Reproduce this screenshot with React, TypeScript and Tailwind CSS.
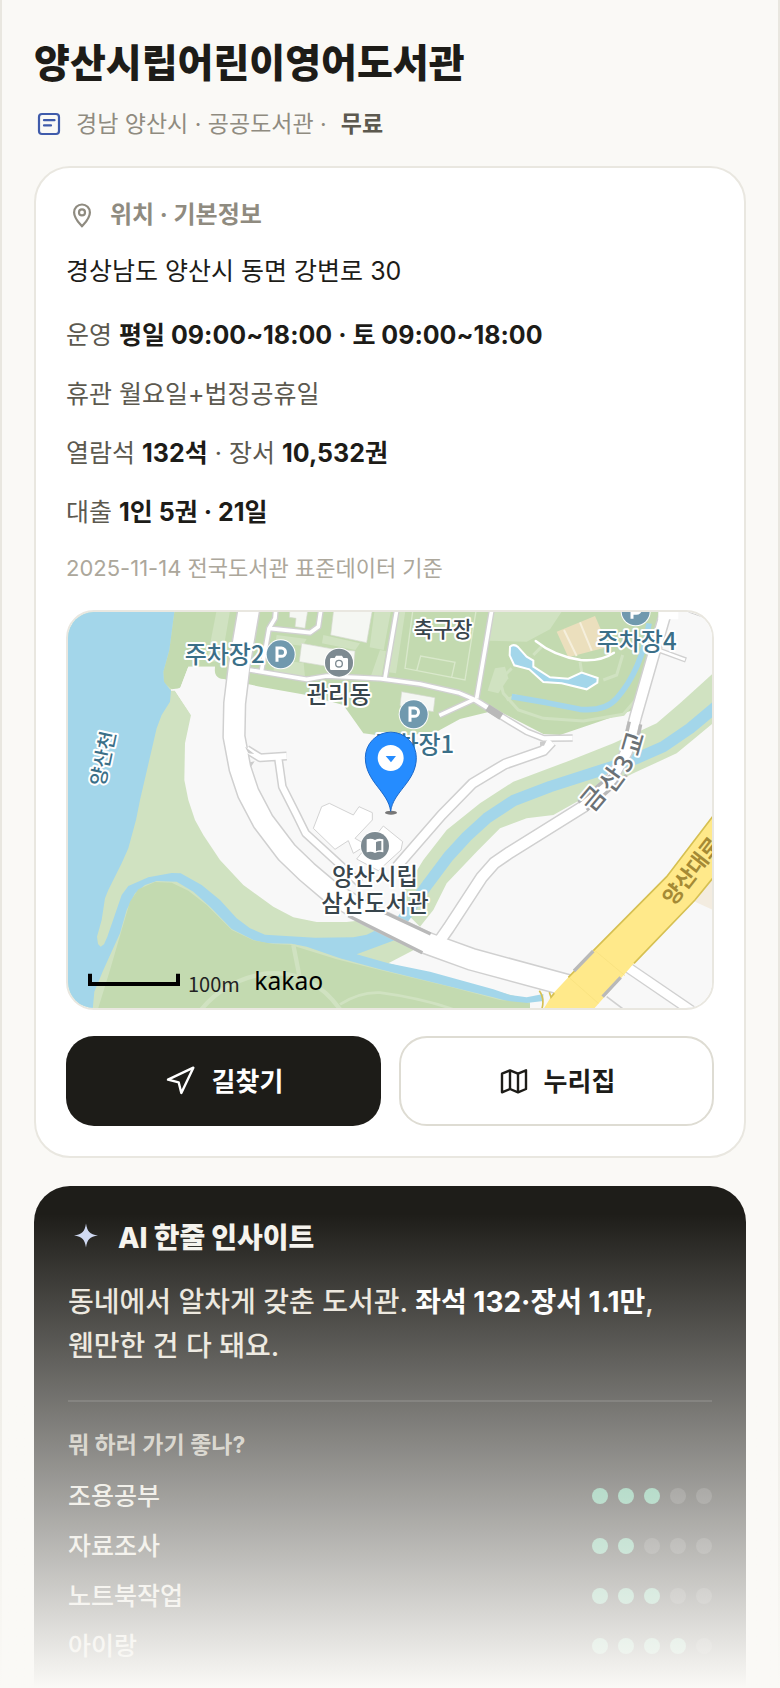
import type { ReactNode } from 'react';
import { Navigation } from 'lucide-react';

const ACTIVITIES = [
    { name: '조용공부', score: 3 },
    { name: '자료조사', score: 2 },
    { name: '노트북작업', score: 3 },
    { name: '아이랑', score: 4 },
];

const DocIcon = () => (
    <svg viewBox="0 0 30 30" className="size-[30px] shrink-0" fill="none" stroke="#3f5bab" strokeWidth="2.200" strokeLinecap="round" aria-hidden="true">
        <rect x="5" y="5" width="20" height="20" rx="3" />
        <path d="M10 11.2h10.500M10 16.400h7" />
    </svg>
);

const PinIcon = () => (
    <svg viewBox="0 0 30 30" className="size-[30px] shrink-0" fill="none" stroke="#8f8b80" strokeWidth="2.200" strokeLinejoin="round" aria-hidden="true">
        <path d="M16 26.300c-2-2.600-7.900-7.800-7.900-13.900a7.900 7.900 0 0 1 15.800 0c0 6.100-5.900 11.300-7.900 13.900z" />
        <circle cx="16" cy="12.400" r="3" />
    </svg>
);

const FoldedMapIcon = () => (
    <svg viewBox="0 0 24 24" className="size-8" fill="none" stroke="currentColor" strokeWidth="1.800" strokeLinejoin="round" aria-hidden="true">
        <path d="M3 6.500 9 4l6 2.500L21 4v14l-6 2.500L9 18l-6 2.500z" />
        <path d="M9 4v14M15 6.500v14" />
    </svg>
);

const SparkIcon = () => (
    <svg viewBox="0 0 36 36" className="size-9 shrink-0" fill="#ced8f2" aria-hidden="true">
        <path d="M18 3.500c1.200 7.800 3.600 10.800 12 12-8.400 1.200-10.800 4.200-12 12-1.200-7.800-3.600-10.800-12-12 8.400-1.200 10.800-4.200 12-12z" />
    </svg>
);

type LabelProps = {
    x: number;
    y: number;
    size?: number;
    weight?: number;
    rotate?: number;
    fill?: string;
    halo?: string;
    anchor?: 'start' | 'middle';
    children: ReactNode;
};

const MapLabel = ({ x, y, size = 72, weight = 500, rotate = 0, fill = '#38454c', halo = '#ffffff', anchor = 'start', children }: LabelProps) => (
    <text
        transform={`translate(${x} ${y}) rotate(${rotate})`}
        fontSize={size}
        fontWeight={weight}
        fill={fill}
        stroke={halo}
        strokeWidth="12"
        strokeLinejoin="round"
        paintOrder="stroke"
        textAnchor={anchor}
    >
        {children}
    </text>
);

const Parking = ({ x, y }: { x: number; y: number }) => (
    <g transform={`translate(${x} ${y})`}>
        <circle r="45" fill="#fff" />
        <circle r="42" fill="#7099ae" />
        <path d="M-11 22v-41h13a12 12 0 0 1 0 25h-13" fill="none" stroke="#fff" strokeWidth="9" />
    </g>
);

const mainRoad = 'M568 20 538 195 524 310 522 410 540 505 565 580 610 665 680 757 740 815 812 876 925 945 1097 1028 1235 1078 1530 1158';
const bridgeRoad = 'M1130 1035 1165 985 1265 832 1302 790 1350 757 1570 620 1650 545 1700 455 1727 350 1790 130 1822 20';
const parkRoads =
    'M570 210 740 238 800 228 960 236 1080 252 1195 278 1243 298 1138 346M1012 20 975 234M1297 20 1250 295M648 20 645 55 627 85 605 210M627 85 750 98 775 80 784 20';
const linkRoad = 'M1243 298 1345 362 1400 395 1450 415 1538 414';
const loopRoad = 'M1475 425 1450 452 1335 492 1238 550 1145 645 1010 800';
const rampRoad = 'M560 448 600 473 680 468M655 475 667 560 710 645 737 700 830 785 900 850';
const cornerRoad = 'M1700 1100 1920 1250';

const MapDrawing = () => (
    <svg
        viewBox="24 36 1932 1188"
        preserveAspectRatio="xMidYMid slice"
        className="block size-full font-['Noto_Sans_CJK_KR','Noto_Sans',sans-serif]"
        role="img"
        aria-label="도서관 주변 지도"
    >
        <rect x="0" y="0" width="2000" height="1300" fill="#f8f8f8" />

        {/* river banks */}
        <path
            fill="#d0e2c1"
            d="M0 20H345L333 272H345L393 345 375 430 373 540 385 600 405 660 430 705 480 780 550 855 640 920 700 952 770 966 860 966 960 955 1080 1040 985 1090 1410 1200V1240H0z"
        />
        <path
            fill="#d0e2c1"
            d="M1010 910 1090 780 1160 690 1260 610 1360 545 1520 485 1660 430 1790 370 1860 310 1970 210V360L1910 410 1850 460 1720 520 1560 600 1480 645 1400 655 1320 685 1250 755 1160 850 1120 930 1080 980z"
        />

        {/* park */}
        <path fill="#c3dab0" d="M345 20 328 150 310 215 312 248 335 268 360 265 385 200 465 200 470 225 495 238 600 260 740 285 850 315 910 400 1000 412 1130 395 1200 357 1310 330 1450 402 1500 405 1720 330 1840 20z" />
        <path fill="#f8f8f8" d="M385 200H465L470 225 495 238 505 330 393 345 345 272 362 262z" />
        <path fill="#c3dab0" d="M465 200h40l-8 38c-20-2-36-6-32-38z" />
        <g fill="#d0e2c1">
            <path d="M472 20h40L484 185H440zM1300 20h215L1470 88 1400 125 1285 122zM650 105l90 12-12 20-82-8zM945 20h50l-24 130-42-8zM640 215l95 16-4-42-85-10zM960 150l18 4-14 78-32-2zM1010 20h28l-30 200-28-4zM790 105l110 25-14 20-100-20z" />
            <path d="m1305 205 30-5 10 35-30 45-32-8z" />
        </g>

        {/* playing field and courts */}
        <g fill="none" stroke="#d9e8cb" strokeWidth="4">
            <path d="m1060 20-25 185 180 35 35-220M1070 213l12-45 103 19-10 45" />
        </g>
        <path fill="#ebdfbd" d="m1490 95 115-47 40 92-120 32z" />
        <path fill="none" stroke="#f5efdc" strokeWidth="6" d="m1512 90 38 78M1560 67l35 85" />
        <g fill="none" stroke="#d0e2c1" strokeWidth="9">
            <path d="m1355 205-35 35 10 40 45 50 75 25 120 8 120-20 60-70 35-110 20-80M1370 285l-30 15M1560 185l5 30M1630 240l40-15 18-60M1420 165l25-25" />
        </g>
        <path fill="none" stroke="#fff" strokeWidth="7" strokeLinecap="round" d="M1427 123q55 45 135 57 60 5 100-22" />

        {/* buildings */}
        <g fill="#f5f7f3" stroke="#d5dacf" strokeWidth="2">
            <path d="m690 20-2 32 20 3-3 25 30 5 10-65zM822 20l-10 85 108 23 19-108zM725 130l-7 55 95 16 68-3 4-45-60-5zM1025 275l100 18-5 42-100-18z" />
        </g>
        <g fill="#fff" stroke="#d3d3d3" strokeWidth="3">
            <path d="m760 685 25-65 23-10 72 35 17-25 40 18v22l-52 55 35 20-40 25-15-38-40 26zM970 678l58 47-5 25-68 62-65-35z" />
        </g>

        {/* water */}
        <g fill="#a3d6ea">
            <path d="M0 20H345L328 150 310 215 312 245 333 272 330 305 305 345 290 385 240 600 228 660 205 745 185 790 145 870 135 895 125 960 111 1010 114 1032 122 1040 132 1033 142 1010 185 885 205 858 265 832 335 819 362 820 425 855 480 900 530 955 570 985 615 1004 765 1013 880 1012 920 1004 980 975 1060 1000 890 1063 985 1090 1110 1115 1300 1168 1350 1185 1400 1192 1450 1182V1203L1400 1209 1360 1208 1300 1192 1130 1150 960 1108 840 1075 740 1040 695 1031 620 1030 580 1020 515 987 450 920 400 875 350 845 290 843 255 855 225 880 200 930 180 1000 130 1110 103 1175 97 1240H0z" />
            <path d="M1350 140q12-10 25 2l25 28 20 12v18l50 32 55 4 40-18 48 16-1 14-32 20-75-18-55-4-42-38-45-12-14-30z" stroke="#fff" strokeWidth="6" />
        </g>
        <g fill="none" stroke="#a3d6ea" strokeLinejoin="round">
            <path strokeWidth="34" d="M1020 970 1105 850 1165 770 1220 710 1280 655 1360 602 1470 560 1650 502 1730 475 1810 440 1890 385 1980 310" />
            <path strokeWidth="17" d="M1355 290 1460 308 1560 328Q1635 335 1670 295 1745 210 1767 70" />
        </g>

        {/* lower meadow */}
        <path fill="#c3dab0" d="M110 1240 150 1110 185 990 210 905 235 868 285 846 335 848 385 872 440 915 515 990 580 1021 640 1032 690 1034 830 1078 960 1110 1160 1158 1320 1200 1410 1210V1240z" />
        <g fill="none" stroke="#d0e2c1" strokeWidth="13">
            <path d="M415 1240Q490 1140 620 1120 760 1110 845 1235M700 1035l18 92" />
            <path strokeWidth="8" d="M840 1213Q900 1175 960 1178 1090 1195 1200 1235" />
        </g>

        {/* road casings, then surfaces, so that junctions merge */}
        <g fill="none" stroke="#d0d0d0" strokeLinejoin="round">
            <path strokeWidth="70" d={mainRoad} />
            <path strokeWidth="40" d={bridgeRoad} />
            <path strokeWidth="19" d={parkRoads} />
            <path strokeWidth="22" d={linkRoad} />
            <path strokeWidth="34" d={loopRoad} />
            <path strokeWidth="27" d={rampRoad} />
            <path strokeWidth="34" d={cornerRoad} />
            <path strokeWidth="16" d="m1795 150 83 30" />
            <path strokeWidth="5" d="m1640 1190 60 45" />
            <path strokeWidth="3" d="m1885 36 80 28" />
        </g>
        <g fill="none" stroke="#fff" strokeLinejoin="round">
            <path strokeWidth="61" d={mainRoad} />
            <path strokeWidth="31" d={bridgeRoad} />
            <path strokeWidth="11" d={parkRoads} />
            <path strokeWidth="13" d={linkRoad} />
            <path strokeWidth="25" d={loopRoad} />
            <path strokeWidth="18" d={rampRoad} />
            <path strokeWidth="26" d={cornerRoad} />
            <path strokeWidth="8" d="m1790 148 85 31" />
            <path strokeWidth="26" d="M1795 45h60" />
        </g>
        <path fill="#ccc" d="m555 440 28 22-18-2zM570 487l14-3-12 18zM1440 425h18l-6 12h-12z" />
        <g fill="none" stroke="#b9b9b9" strokeWidth="10">
            <path d="m865 947 222 111M975 938l137 64M1708 365l-10 45M1742 373l-8 40M1555 607l110-92M1580 630l120-105" />
            <path strokeWidth="22" d="m1282 323 42 27" />
        </g>

        {/* highway */}
        <path fill="#f3ece0" d="m1905 905 60 28V820z" />
        <path fill="#ffe98a" d="M1970 634 1820 830 1600 1052 1525 1132 1478 1182 1443 1240H1590L1700 1115 1722 1090 1905 900 1970 820z" />
        <g fill="none" stroke="#d6c052" strokeWidth="5">
            <path d="M1970 634 1820 830 1600 1052M1970 820 1905 900 1722 1090M1545 1112l-20 20M1438 1172q18 26 6 60M1468 1177l5 15 10-12" />
        </g>
        <path fill="none" stroke="#b9b9b9" strokeWidth="10" d="m1600 1053-58 60M1682 1132l-54 58" />
        <path fill="none" stroke="#f6df7c" strokeWidth="2" d="m1605 1052 90 75M1530 1135l85 75" />

        {/* labels */}
        <Parking x={662} y={163} />
        <Parking x={1061} y={343} />
        <Parking x={1727} y={34} />
        <MapLabel x={374} y={188} fill="#3b6f88">주차장2</MapLabel>
        <MapLabel x={1610} y={149} fill="#3b6f88">주차장4</MapLabel>
        <MapLabel x={943} y={460} fill="#3b6f88">주차장1</MapLabel>
        <MapLabel x={836} y={308} size={70} anchor="middle">관리동</MapLabel>
        <MapLabel x={1149} y={110} size={64} anchor="middle">축구장</MapLabel>
        <MapLabel x={945} y={855} size={70} anchor="middle">양산시립</MapLabel>
        <MapLabel x={945} y={935} size={70} anchor="middle">삼산도서관</MapLabel>
        <MapLabel x={150} y={480} size={60} rotate={-78} fill="#3b6f88" anchor="middle">양산천</MapLabel>
        <g>
            <MapLabel x={1620} y={613} size={76} rotate={-50} fill="#6b7276" anchor="middle">금</MapLabel>
            <MapLabel x={1677} y={555} size={76} rotate={-54} fill="#6b7276" anchor="middle">산</MapLabel>
            <MapLabel x={1715} y={503} size={76} rotate={-62} fill="#6b7276" anchor="middle">3</MapLabel>
            <MapLabel x={1745} y={438} size={76} rotate={-74} fill="#6b7276" anchor="middle">교</MapLabel>
        </g>
        <MapLabel x={1840} y={920} size={64} weight={700} rotate={-52} fill="#a58a35" halo="#ffe98a">양산대로</MapLabel>

        <g transform="translate(837 188)">
            <circle r="45" fill="#fff" />
            <circle r="42" fill="#7d8a91" />
            <path fill="#fff" d="M-23-14h10l4-7H9l4 7h10q4 0 4 4v28q0 4-4 4h-46q-4 0-4-4v-28q0-4 4-4z" />
            <circle cy="3" r="10" fill="#fff" stroke="#7d8a91" strokeWidth="4" />
        </g>
        <g transform="translate(945 738)">
            <circle r="45" fill="#fff" />
            <circle r="42" fill="#7d8a91" />
            <path fill="#fff" d="M-25-20q14-4 25 2 11-6 25-2v39q-14-4-25 2-11-6-25-2z" />
            <path fill="#7d8a91" d="M3-12q8-4 16-3v28q-8-1-16 3z" />
        </g>

        {/* library marker */}
        <ellipse cx="993" cy="638" rx="18" ry="6" fill="#777" />
        <path
            d="M992 634C985 575 916 545 916 473a76 76 0 0 1 153 0C1069 545 999 575 992 634z"
            fill="#258cff"
            stroke="#1c69ca"
            strokeWidth="3"
        />
        <circle cx="992" cy="474" r="39" fill="#fff" />
        <path fill="#258cff" d="M977 468h31l-15 19z" />

        {/* scale bar */}
        <path d="M90 1121v31h264v-31" fill="none" stroke="#000" strokeWidth="12" />
        <text x="384" y="1175" fontSize="60" fill="#222">100m</text>
        <text x="583" y="1169" fontSize="74" fill="#000" className="font-['Noto_Sans',sans-serif]">kakao</text>
    </svg>
);

const ScoreDots = ({ score }: { score: number }) => (
    <span className="flex gap-2.5" role="img" aria-label={`5점 중 ${score}점`}>
        {[1, 2, 3, 4, 5].map((n) => (
            <span key={n} className={n <= score ? 'size-4 rounded-full bg-[#5bb48e]' : 'size-4 rounded-full bg-white/15'} />
        ))}
    </span>
);

const LocationCard = () => (
    <section className="mt-[26px] rounded-[36px] border-2 border-[#e9e7e0] bg-white px-[30px] pt-[29px] pb-[30px]">
        <h2 className="flex items-center gap-3.5 text-[24px] leading-9 font-bold text-[#8f8b80]">
            <PinIcon />
            위치 · 기본정보
        </h2>
        <p className="mt-[19px] text-[25px] leading-[38px] text-[#1d1c18]">경상남도 양산시 동면 강변로 30</p>
        <div className="mt-4 text-[25px] leading-[59px] text-[#5c594f] [&_strong]:font-bold [&_strong]:text-[#1d1c18]">
            <p>
                운영 <strong>평일 09:00~18:00 · 토 09:00~18:00</strong>
            </p>
            <p>휴관 월요일+법정공휴일</p>
            <p>
                열람석 <strong>132석</strong> · 장서 <strong>10,532권</strong>
            </p>
            <p>
                대출 <strong>1인 5권 · 21일</strong>
            </p>
        </div>
        <p className="mt-2 text-[22px] leading-9 text-[#aca79b]">2025-11-14 전국도서관 표준데이터 기준</p>

        <div className="mt-6 h-[400px] overflow-hidden rounded-[28px] border-2 border-[#e9e7e0]">
            <MapDrawing />
        </div>

        <div className="mt-[26px] grid grid-cols-2 gap-[18px] text-[26px] font-bold">
            <button type="button" className="flex h-[90px] items-center justify-center gap-4 rounded-[28px] bg-[#1d1c18] text-white">
                <Navigation className="size-8" strokeWidth={1.8} />
                길찾기
            </button>
            <button type="button" className="flex h-[90px] items-center justify-center gap-3.5 rounded-[28px] border-2 border-[#dedcd3] bg-white text-[#1d1c18]">
                <FoldedMapIcon />
                누리집
            </button>
        </div>
    </section>
);

const InsightCard = () => (
    <section className="mt-7 rounded-t-[36px] bg-[#1e1d19] px-[34px] pt-8 pb-[17px]">
        <h2 className="flex items-center gap-3.5 text-[28px] leading-10 font-extrabold text-[#f5f3ee]">
            <SparkIcon />
            AI 한줄 인사이트
        </h2>
        <p className="mt-[22px] text-[28px] leading-[44px] font-medium text-[#e9e4da]">
            동네에서 알차게 갖춘 도서관. <strong className="font-bold text-white">좌석 132·장서 1.1만</strong>,
            <br />
            웬만한 건 다 돼요.
        </p>
        <hr className="mt-8 border-t-2 border-white/12" />
        <h3 className="mt-[25px] text-[23px] leading-9 font-bold text-[#bcb8ac]">뭐 하러 가기 좋나?</h3>
        <ul className="mt-2 text-[25px] leading-[50px] font-medium text-[#e6e3da]">
            {ACTIVITIES.map((item) => (
                <li key={item.name} className="flex items-center justify-between">
                    {item.name}
                    <ScoreDots score={item.score} />
                </li>
            ))}
        </ul>
    </section>
);

export default function App() {
    return (
        <main className="relative border-x-2 border-[#e9e7e0] bg-[#faf9f6] px-8 pt-[39px] font-['Inter','Noto_Sans_CJK_KR',sans-serif]">
            <h1 className="text-[39px] leading-[48px] font-extrabold text-[#1d1c18]">양산시립어린이영어도서관</h1>
            <p className="mt-[21px] flex items-center text-[23px] leading-8 text-[#8f8b80]">
                <DocIcon />
                <span className="ml-3">경남 양산시 · 공공도서관 ·</span>
                <strong className="ml-3.5 font-bold text-[#5c594f]">무료</strong>
            </p>
            <LocationCard />
            <InsightCard />
            {/* preview fades out into the page */}
            <div className="pointer-events-none absolute -inset-x-0.5 bottom-0 h-[474px] bg-linear-to-b from-[#faf9f6]/0 to-[#faf9f6]" />
        </main>
    );
}
